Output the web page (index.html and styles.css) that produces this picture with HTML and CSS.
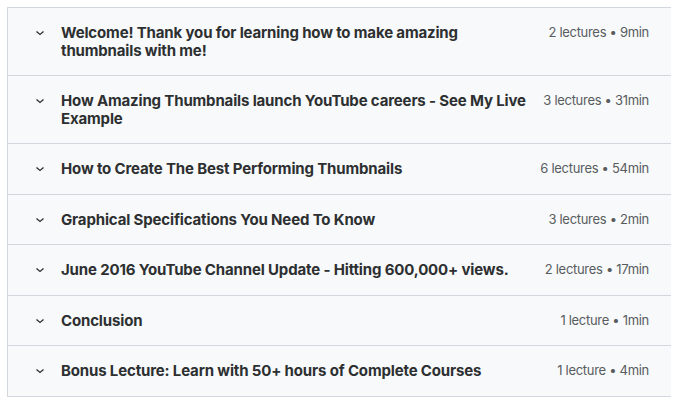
FILE: index.html
```html
<!DOCTYPE html>
<html lang="en">
<head>
<meta charset="UTF-8">
<meta name="viewport" content="width=device-width,initial-scale=1">
<title>Course content</title>
<link rel="stylesheet" href="styles.css">
</head>
<body>

<div class="curriculum">
	<div class="section">
		<svg class="chevron" viewBox="0 0 16 16"><path d="M4.5 6.5l3.5 3 3.5-3"/></svg>
		<h3 class="title">Welcome! Thank you for learning how to make amazing thumbnails with me!</h3>
		<span class="meta">2 lectures • 9min</span>
	</div>
	<div class="section">
		<svg class="chevron" viewBox="0 0 16 16"><path d="M4.5 6.5l3.5 3 3.5-3"/></svg>
		<h3 class="title">How Amazing Thumbnails launch YouTube careers - See My Live Example</h3>
		<span class="meta">3 lectures • 31min</span>
	</div>
	<div class="section">
		<svg class="chevron" viewBox="0 0 16 16"><path d="M4.5 6.5l3.5 3 3.5-3"/></svg>
		<h3 class="title">How to Create The Best Performing Thumbnails</h3>
		<span class="meta">6 lectures • 54min</span>
	</div>
	<div class="section">
		<svg class="chevron" viewBox="0 0 16 16"><path d="M4.5 6.5l3.5 3 3.5-3"/></svg>
		<h3 class="title">Graphical Specifications You Need To Know</h3>
		<span class="meta">3 lectures • 2min</span>
	</div>
	<div class="section">
		<svg class="chevron" viewBox="0 0 16 16"><path d="M4.5 6.5l3.5 3 3.5-3"/></svg>
		<h3 class="title">June 2016 YouTube Channel Update - Hitting 600,000+ views.</h3>
		<span class="meta">2 lectures • 17min</span>
	</div>
	<div class="section">
		<svg class="chevron" viewBox="0 0 16 16"><path d="M4.5 6.5l3.5 3 3.5-3"/></svg>
		<h3 class="title">Conclusion</h3>
		<span class="meta">1 lecture • 1min</span>
	</div>
	<div class="section">
		<svg class="chevron" viewBox="0 0 16 16"><path d="M4.5 6.5l3.5 3 3.5-3"/></svg>
		<h3 class="title">Bonus Lecture: Learn with 50+ hours of Complete Courses</h3>
		<span class="meta">1 lecture • 4min</span>
	</div>
</div>

</body>
</html>
```

FILE: styles.css
```css
body {
	margin: 7px;
	background: #fff;
	font-family: Inter, "Liberation Sans", sans-serif;
	color: #2d2f31;
}
.curriculum {
	width: 664px;
	border: 1px solid #d1d7dc;
	background: #f7f9fa;
}
.section {
	display: flex;
	align-items: flex-start;
	padding: 16px 23px 16px 24px;
	border-top: 1px solid #d1d7dc;
}
.section:first-child {
	border-top: 0;
}
.chevron {
	flex: none;
	width: 16px;
	height: 16px;
	margin: 1px 13px 0 0;
	fill: none;
	stroke: #2d2f31;
	stroke-width: 1.3;
}
.title {
	flex: 1;
	margin: 0;
	font-size: 15px;
	font-weight: 700;
	line-height: 17.5px;
	letter-spacing: -0.15px;
}
.meta {
	flex: none;
	margin-left: 12px;
	font-size: 13px;
	line-height: 17.5px;
	letter-spacing: -0.3px;
	color: #595c5f;
}
```
